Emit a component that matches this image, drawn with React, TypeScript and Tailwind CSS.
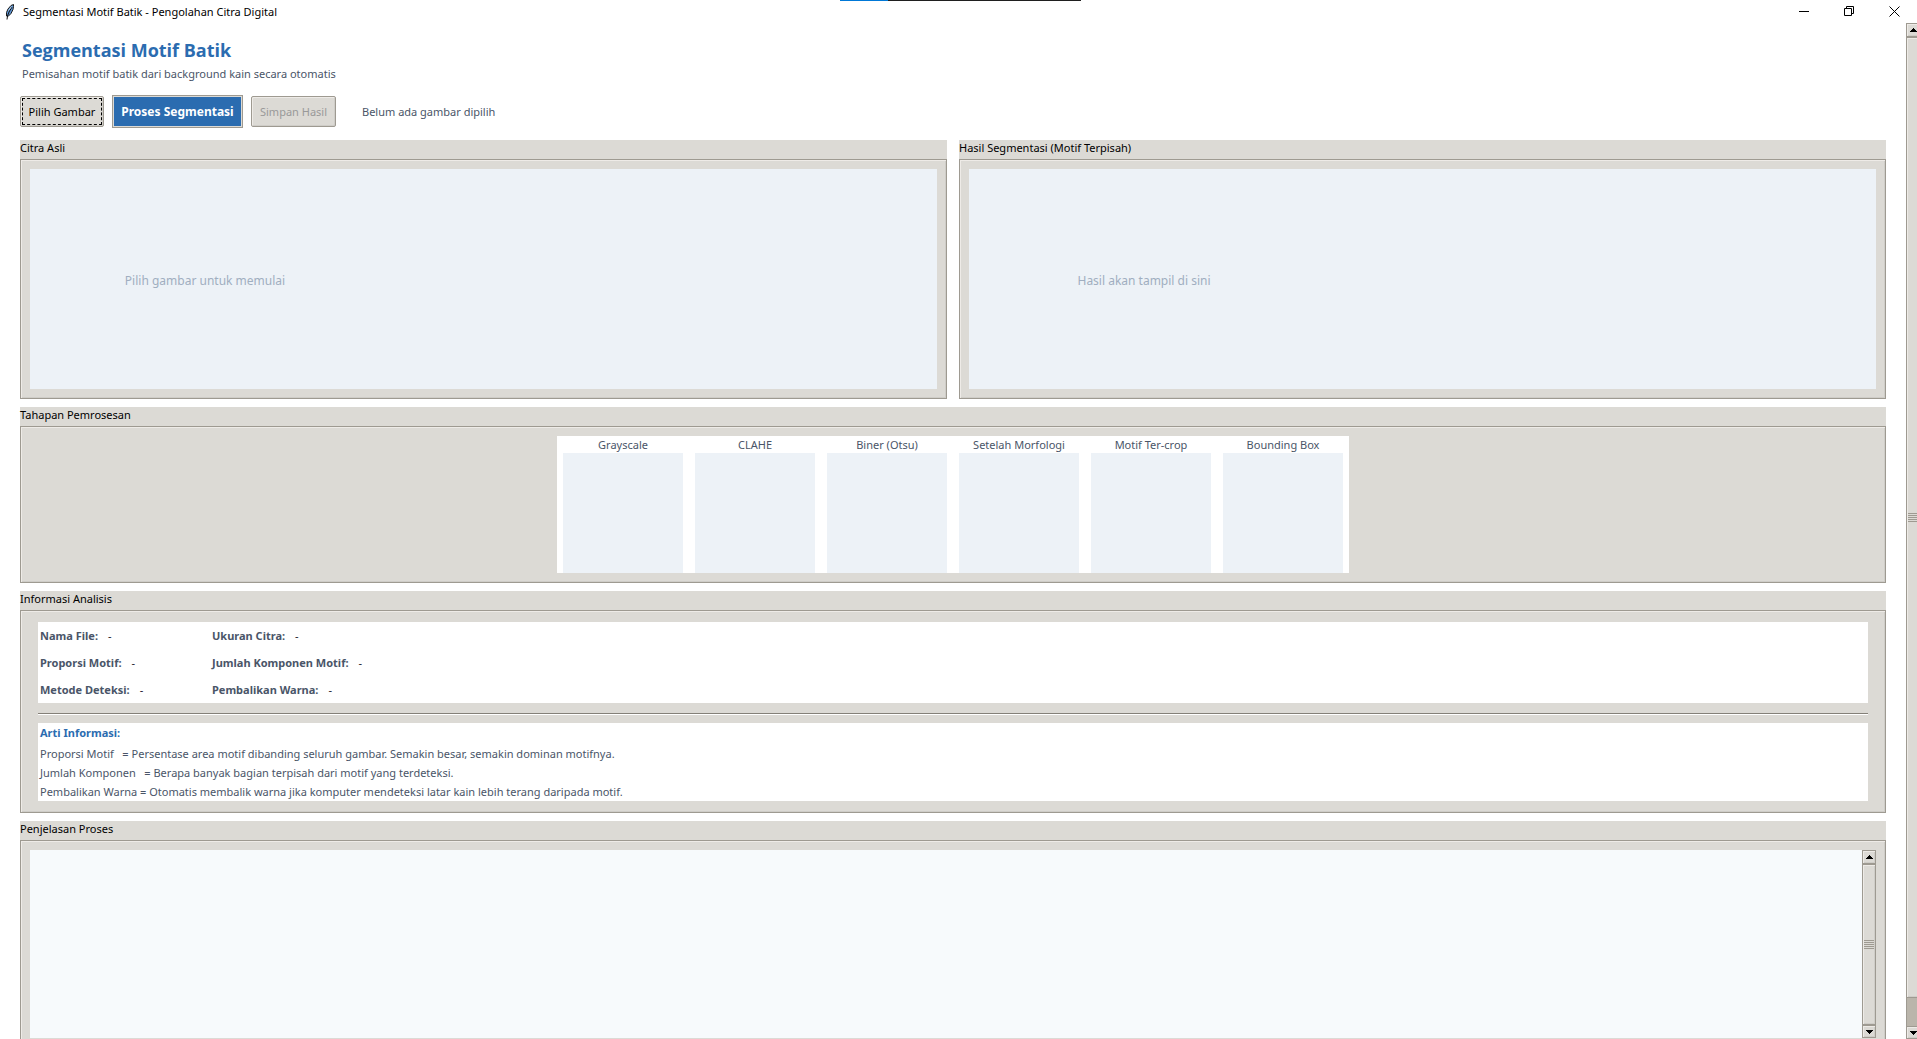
import React from "react";

interface PanelProps {
  title: string;
  bodyClassName?: string;
  children: React.ReactNode;
}

interface InfoItem {
  label: string;
  value: string;
}

const stages: string[] = [
  "Grayscale",
  "CLAHE",
  "Biner (Otsu)",
  "Setelah Morfologi",
  "Motif Ter-crop",
  "Bounding Box",
];

const infoItems: InfoItem[] = [
  { label: "Nama File:", value: "-" },
  { label: "Ukuran Citra:", value: "-" },
  { label: "Proporsi Motif:", value: "-" },
  { label: "Jumlah Komponen Motif:", value: "-" },
  { label: "Metode Deteksi:", value: "-" },
  { label: "Pembalikan Warna:", value: "-" },
];

const meanings: string[] = [
  "Proporsi Motif   = Persentase area motif dibanding seluruh gambar. Semakin besar, semakin dominan motifnya.",
  "Jumlah Komponen   = Berapa banyak bagian terpisah dari motif yang terdeteksi.",
  "Pembalikan Warna = Otomatis membalik warna jika komputer mendeteksi latar kain lebih terang daripada motif.",
];

const raised =
  "border border-[#9e9a91] bg-[#dcdad5] shadow-[inset_1px_1px_0_#eeebe7,inset_-1px_-1px_0_#cfcdc8]";

const FeatherIcon: React.FC = () => (
  <svg width="16" height="16" viewBox="0 0 16 16" aria-hidden="true">
    <path
      d="M9.5 0.5 L7 1.5 L4 5 L2.5 8.5 L2.5 12 L4 12.5 L7 9.5 L9 5.5 L9.5 2.5 Z"
      fill="#5b93d3"
      stroke="#1a1a1a"
      strokeWidth="1"
    />
    <path d="M8 3 L5 8 L3.5 12 L3 15.5" fill="none" stroke="#111" strokeWidth="1" />
    <path d="M7.5 2.5 L4.5 6.5" fill="none" stroke="#b9d4ef" strokeWidth="1" />
  </svg>
);

const TitleBar: React.FC = () => (
  <header className="relative flex h-[23px] shrink-0 items-center bg-white pl-1">
    <div className="absolute top-0 left-[840px] flex h-px w-[241px] bg-[#1f1f1f]">
      <div className="w-12 bg-[#0078d7]" />
    </div>
    <FeatherIcon />
    <span className="ml-[3px] text-black">
      Segmentasi Motif Batik - Pengolahan Citra Digital
    </span>
    <div className="ml-auto flex items-center">
      <button aria-label="Minimize" className="flex h-[21px] w-[45px] items-center justify-center">
        <svg width="11" height="11" viewBox="0 0 11 11" stroke="#000" fill="none">
          <path d="M0 5.5H10" />
        </svg>
      </button>
      <button aria-label="Restore" className="flex h-[21px] w-[45px] items-center justify-center">
        <svg width="11" height="11" viewBox="0 0 11 11" stroke="#000" fill="none">
          <path d="M0.5 2.5H7.5V9.5H0.5ZM2.5 2.5V0.5H9.5V7.5H7.5" />
        </svg>
      </button>
      <button aria-label="Close" className="flex h-[21px] w-[45px] items-center justify-center">
        <svg width="11" height="11" viewBox="0 0 11 11" stroke="#000" fill="none">
          <path d="M0.5 0.5L10.5 10.5M10.5 0.5L0.5 10.5" />
        </svg>
      </button>
    </div>
  </header>
);

const Arrow: React.FC<{ down?: boolean }> = ({ down }) => (
  <svg
    width="7"
    height="4"
    viewBox="0 0 7 4"
    shapeRendering="crispEdges"
    className={down ? "rotate-180" : ""}
    aria-hidden="true"
  >
    <path d="M3 0H4V1H5V2H6V3H7V4H0V3H1V2H2V1H3Z" fill="#000" />
  </svg>
);

const Scrollbar: React.FC<{ trough?: boolean }> = ({ trough }) => (
  <div className="flex w-[14px] shrink-0 flex-col bg-[#bab5ab]">
    <button
      aria-label="Scroll up"
      className={`flex h-[14px] shrink-0 items-center justify-center ${raised}`}
    >
      <Arrow />
    </button>
    <div className={`flex flex-1 flex-col items-center justify-center ${raised}`}>
      <div className="flex w-[10px] flex-col gap-px">
        <div className="h-px bg-[#9e9a91]" />
        <div className="h-px bg-[#9e9a91]" />
        <div className="h-px bg-[#9e9a91]" />
        <div className="h-px bg-[#9e9a91]" />
        <div className="h-px bg-[#9e9a91]" />
      </div>
    </div>
    {trough && <div className="h-7 shrink-0 border-l border-[#9e9a91]" />}
    <button
      aria-label="Scroll down"
      className={`flex h-[13px] shrink-0 items-center justify-center ${raised}`}
    >
      <Arrow down />
    </button>
  </div>
);

const Panel: React.FC<PanelProps> = ({ title, bodyClassName = "p-[9px]", children }) => (
  <section className="bg-[#dcdad5]">
    <h2 className="h-[19px] leading-4 text-black">{title}</h2>
    <div className={`${raised} ${bodyClassName}`}>{children}</div>
  </section>
);

const Preview: React.FC<{ text: string }> = ({ text }) => (
  <div className="h-[220px] bg-[#edf2f7]">
    <p className="flex h-full w-[350px] items-center justify-center pt-1 text-[12px] text-[#a0aec0]">
      {text}
    </p>
  </div>
);

const App: React.FC = () => {
  return (
    <div className="flex h-screen flex-col overflow-hidden bg-white font-['Noto_Sans','Open_Sans',sans-serif] text-[11px] leading-4 text-[#4a5568]">
      <TitleBar />
      <div className="flex min-h-0 flex-1">
        <main className="min-w-0 flex-1 overflow-hidden px-5">
          <div className="pt-[14px] pl-0.5">
            <h1 className="font-['Open_Sans','Noto_Sans',sans-serif] text-[18px] leading-[26px] font-bold text-[#2b6cb0]">
              Segmentasi Motif Batik
            </h1>
            <p className="mt-[3px]">Pemisahan motif batik dari background kain secara otomatis</p>
          </div>

          <div className="mt-[13px] flex h-[33px] items-center">
            <button className={`h-[31px] w-[84px] rounded-[2px] p-px text-black ${raised}`}>
              <span className="flex h-full items-center justify-center border border-dashed border-black">
                Pilih Gambar
              </span>
            </button>
            <button className="ml-2 h-[33px] w-[131px] border border-[#9e9a91] bg-[#2b6cb0] text-[12px] font-bold text-white shadow-[inset_0_0_0_1px_#dcdad5]">
              Proses Segmentasi
            </button>
            <button
              disabled
              className={`ml-2 h-[31px] w-[85px] rounded-[2px] text-[#999999] ${raised}`}
            >
              Simpan Hasil
            </button>
            <span className="ml-[26px]">Belum ada gambar dipilih</span>
          </div>

          <div className="mt-3 flex flex-col gap-2">
            <div className="grid grid-cols-2 gap-3">
              <Panel title="Citra Asli">
                <Preview text="Pilih gambar untuk memulai" />
              </Panel>
              <Panel title="Hasil Segmentasi (Motif Terpisah)">
                <Preview text="Hasil akan tampil di sini" />
              </Panel>
            </div>

            <Panel title="Tahapan Pemrosesan" bodyClassName="flex justify-center p-[9px]">
              <div className="flex gap-3 bg-white px-1.5">
                {stages.map((stage) => (
                  <figure key={stage} className="w-[120px]">
                    <figcaption className="h-[17px] text-center leading-[17px]">{stage}</figcaption>
                    <div className="h-[120px] bg-[#edf2f7]" />
                  </figure>
                ))}
              </div>
            </Panel>

            <Panel title="Informasi Analisis" bodyClassName="px-[17px] py-[11px]">
              <dl className="grid grid-cols-[172px_1fr] bg-white px-0.5">
                {infoItems.map((item) => (
                  <div key={item.label} className="flex h-[27px] items-center gap-[10px]">
                    <dt className="font-bold">{item.label}</dt>
                    <dd className="text-[#1a202c]">{item.value}</dd>
                  </div>
                ))}
              </dl>
              <hr className="mt-[10px] mb-2 h-0.5 border-t border-b border-t-[#848078] border-b-white" />
              <div className="bg-white px-0.5">
                <h3 className="h-[21px] leading-5 font-bold text-[#2b6cb0]">Arti Informasi:</h3>
                {meanings.map((line) => (
                  <p key={line} className="leading-[19px] whitespace-pre">
                    {line}
                  </p>
                ))}
              </div>
            </Panel>

            <Panel title="Penjelasan Proses">
              <div className="flex h-[188px]">
                <textarea
                  readOnly
                  aria-label="Penjelasan Proses"
                  className="min-w-0 flex-1 resize-none bg-[#f7fafc] outline-none"
                />
                <Scrollbar />
              </div>
            </Panel>
          </div>
        </main>
        <div className="flex w-[11px] shrink-0 overflow-hidden">
          <Scrollbar trough />
        </div>
      </div>
    </div>
  );
};

export default App;
